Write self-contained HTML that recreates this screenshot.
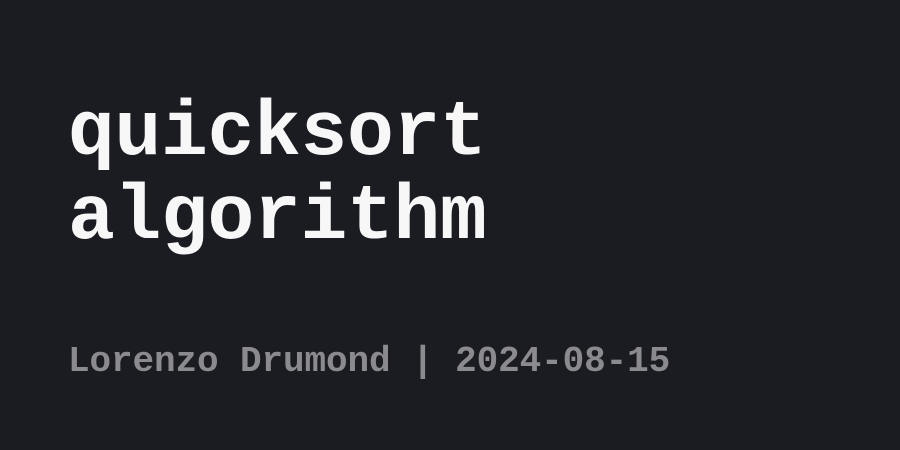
<!DOCTYPE html>
<html><head><meta charset="utf-8"><style>
html,body{margin:0;padding:0;}
body{width:900px;height:450px;background:#1b1c22;position:relative;overflow:hidden;font-family:"Liberation Mono",monospace;font-weight:bold;}
.t{position:absolute;left:68px;top:92px;font-size:78px;line-height:84px;color:#f7f7f7;white-space:pre;letter-spacing:-0.3px;}
.f{position:absolute;left:68px;top:344px;font-size:36px;line-height:36px;color:#8b8b8f;white-space:pre;letter-spacing:-0.1px;}
</style></head><body>
<div class="t">quicksort
algorithm</div>
<div class="f">Lorenzo Drumond | 2024-08-15</div>
</body></html>
